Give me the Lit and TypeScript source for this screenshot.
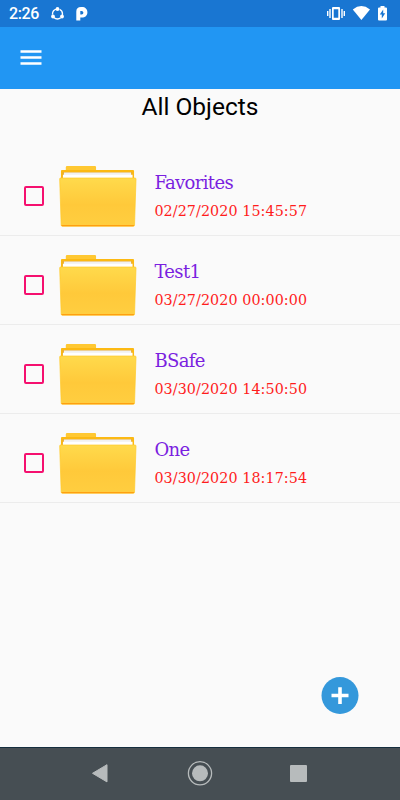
import { LitElement, html, css } from "lit";
import { customElement, property } from "lit/decorators.js";

@customElement("folder-row")
class FolderRow extends LitElement {
  @property() name = "";
  @property() date = "";
  static styles = css`
    :host { display: flex; box-sizing: border-box; height: 89px; border-bottom: 1px solid #ececec; }
    .check { box-sizing: border-box; width: 20px; height: 20px; margin: 39px 15px 0 24.4px; border: 2px solid #f5106f; border-radius: 2px; flex: none; }
    .folder { width: 78px; height: 62px; margin-top: 18px; flex: none; }
    .text { margin: 22px 0 0 17px; font-family: "DejaVu Serif", serif; white-space: nowrap; }
    .name { font-size: 18px; line-height: 28px; color: #7a1fe0; letter-spacing: -0.65px; }
    .date { font-size: 14.3px; line-height: 28px; color: #ff1c1c; letter-spacing: 0.08px; }
  `;
  render() {
    return html`
      <div class="check"></div>
      <svg class="folder" viewBox="0 0 79 62" preserveAspectRatio="none">
        <defs>
          <linearGradient id="front" x1="0" y1="0" x2="0" y2="1">
            <stop offset="0" stop-color="#ffda4c" />
            <stop offset=".55" stop-color="#ffc93a" />
            <stop offset="1" stop-color="#ffce40" />
          </linearGradient>
        </defs>
        <path d="M2 15V6q0-1 1-1h4V2.500q0-1.500 1.500-1.500H36q1.500 0 1.500 1.500V5H75q1 0 1 1v9z" fill="#fcb913" />
        <path d="M7 5V2.500q0-1.500 1.500-1.500H36q1.500 0 1.500 1.500V5z" fill="#ffc832" />
        <path d="M3.500 7H74v7H3.500z" fill="#e9ad32" />
        <path d="M5 7.500h68V14H5z" fill="#f1f1f1" />
        <path d="M4 9.800h70.500V14H4z" fill="#fff" />
        <path d="M1.500 13h75.500q1 0 1 1l-1.500 46q0 1.200-1 1.200H3.200q-1 0-1-1.200L.7 14q0-1 .8-1z" fill="url(#front)" stroke="#ffc928" stroke-width=".7" />
        <path d="M2.500 60h73.500q0 1.300-1 1.300H3.500q-1 0-1-1.300z" fill="#ff9f10" />
      </svg>
      <div class="text">
        <div class="name">${this.name}</div>
        <div class="date">${this.date}</div>
      </div>`;
  }
}

@customElement("app-root")
class AppRoot extends LitElement {
  static styles = css`
    :host { display: flex; flex-direction: column; position: relative; width: 400px; height: 800px; background: #fafafa; font-family: Roboto, sans-serif; overflow: hidden; }
    .status { height: 27px; background: #1976d2; display: flex; align-items: center; color: #fff; flex: none; }
    .time { font-size: 16px; line-height: 27px; margin-left: 9px; width: 41px; font-weight: 500; letter-spacing: -.4px; }
    .left { width: 50px; height: 27px; }
    .right { width: 70px; height: 27px; margin-left: auto; margin-right: 5px; }
    .bar { height: 62px; background: #2196f3; flex: none; display: flex; align-items: center; }
    .menu { width: 22px; height: 16px; margin-left: 20px; }
    h1 { margin: 0; height: 58px; font-size: 24.5px; line-height: 35px; font-weight: 400; text-align: center; color: #000; flex: none; }
    .list { flex: 1; }
    .fab { position: absolute; left: 320px; top: 675px; width: 40px; height: 40px; }
    .nav { height: 53px; box-sizing: border-box; border-top: 1px solid #152e3e; background: #464e53; display: flex; justify-content: center; flex: none; }
    .keys { width: 260px; height: 52px; }
  `;
  items = [
    ["Favorites", "02/27/2020 15:45:57"],
    ["Test1", "03/27/2020 00:00:00"],
    ["BSafe", "03/30/2020 14:50:50"],
    ["One", "03/30/2020 18:17:54"],
  ];
  render() {
    return html`
      <div class="status">
        <span class="time">2:26</span>
        <svg class="left" viewBox="50 0 50 27">
          <circle cx="57.500" cy="14" r="5" fill="none" stroke="#fff" stroke-width="1.300" stroke-dasharray="7.400 3.070" stroke-dashoffset="-4.200" />
          <circle cx="57.500" cy="9" r="1.900" fill="#fff" />
          <circle cx="53" cy="16.500" r="1.900" fill="#fff" />
          <circle cx="62" cy="16.500" r="1.900" fill="#fff" />
          <path fill="#fff" fill-rule="evenodd" d="M76.300 11.500q0-4.500 4.700-4.500h.8c3.400 0 5.600 2 5.600 5.200s-2.200 5.400-5.600 5.400h-1.500v3h-4zM80.300 11v3.600h1.300q1.800 0 1.800-1.800T81.600 11z" />
        </svg>
        <svg class="right" viewBox="325 0 70 27">
          <g fill="#fff">
            <path fill-rule="evenodd" d="M333 7h6q1 0 1 1v11q0 1-1 1h-6q-1 0-1-1V8q0-1 1-1zM333.700 9.300v8.400h4.600V9.300z" />
            <path d="M329.300 9h1.400v9h-1.400zM327 11h1.400v5H327zM341.300 9h1.400v9h-1.400zM343.600 11h1.400v5h-1.400z" />
            <path d="M352.800 9.500Q361.300 2.700 370 9.500L361.400 20z" />
            <path fill-rule="evenodd" d="M380.500 6h4v1.500h1.500q1 0 1 1v11q0 1-1 1h-7q-1 0-1-1v-11q0-1 1-1h1.500zM383.200 9.500l-3.400 5h2v4l3.400-5.300h-2z" />
          </g>
        </svg>
      </div>
      <div class="bar">
        <svg class="menu" viewBox="0 0 22 16"><path fill="#fff" d="M.5 0.300h21v2.500h-21zM.5 6.300h21v2.500h-21zM.5 12.300h21v2.500h-21z" /></svg>
      </div>
      <h1>All Objects</h1>
      <div class="list">
        ${this.items.map(([n, d]) => html`<folder-row .name=${n} .date=${d}></folder-row>`)}
      </div>
      <svg class="fab" viewBox="0 0 40 40">
        <circle cx="20" cy="20.500" r="18.500" fill="#3498db" />
        <path d="M18.200 12.200h3.600v6.500H28.500v3.600h-6.700V29h-3.600v-6.700h-6.700v-3.600h6.700z" fill="#fff" />
      </svg>
      <div class="nav">
        <svg class="keys" viewBox="70 748 260 52">
          <path d="M92.500 773.300L107 764.700v17.200z" fill="#b7bbbc" stroke="#b7bbbc" stroke-width="1" stroke-linejoin="round" />
          <circle cx="200" cy="773.300" r="11.600" fill="none" stroke="#b7bbbc" stroke-width="1.300" />
          <circle cx="200" cy="773.300" r="8" fill="#b7bbbc" />
          <rect x="290" y="765" width="17" height="17" rx="1" fill="#b7bbbc" />
        </svg>
      </div>`;
  }
}
